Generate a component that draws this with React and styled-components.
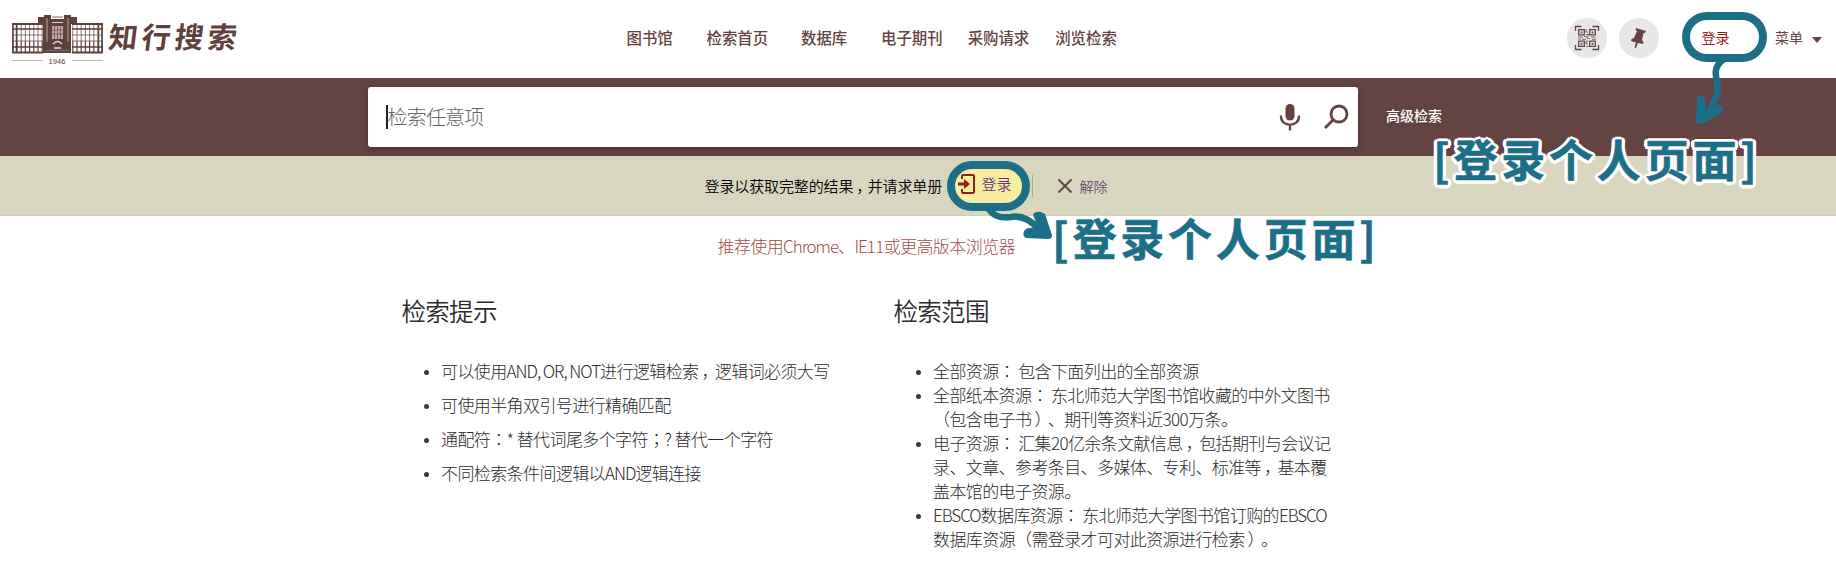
import React from "react";
import styled, { createGlobalStyle } from "styled-components";

const brown = "#644442";
const teal = "#1d6f88";

const GlobalStyle = createGlobalStyle`
  * { box-sizing: border-box; }
  body {
    margin: 0;
    background: #fff;
    color: #2a2a2a;
    font-family: "Noto Sans CJK SC", sans-serif;
    text-spacing-trim: space-all;
    overflow: hidden;
  }
`;

const Page = styled.div`
  position: relative;
  width: 1836px;
  height: 564px;
  overflow: hidden;
`;

const Header = styled.header`
  display: flex;
  align-items: center;
  height: 78px;
  padding-left: 11px;
`;

const Logo = styled.div`
  display: flex;
  width: 615.5px;
  height: 78px;
  align-items: center;
`;

const LogoName = styled.span`
  margin: -8px 0 0 5px;
  color: #5f403c;
  font-size: 29px;
  font-weight: 700;
  letter-spacing: 4px;
  line-height: 40px;
  transform: skewX(-7deg);
`;

const Nav = styled.nav`
  display: flex;
  width: 940.5px;
  margin-top: -5px;
  line-height: 22px;
`;

const NavLink = styled.a`
  margin-right: ${(p) => p.$gap}px;
  color: ${brown};
  font-size: 15.4px;
  font-weight: 500;
  white-space: nowrap;
`;

const RoundButton = styled.button`
  display: flex;
  align-items: center;
  justify-content: center;
  width: 40px;
  height: 40px;
  margin: -2px 11.5px 0 0;
  padding: 0;
  border: 0;
  border-radius: 50%;
  background: #e7e7e7;
`;

const UserLink = styled.a`
  margin: -5px 0 0 31.5px;
  width: 73.5px;
  color: #9b1c1c;
  font-size: 14px;
  line-height: 20px;
`;

const MenuLink = styled.a`
  display: flex;
  align-items: center;
  gap: 9px;
  margin-top: -5px;
  color: ${brown};
  font-size: 14px;
  line-height: 20px;
`;

const Caret = styled.span`
  border: 5.5px solid transparent;
  border-top: 6.5px solid ${brown};
  border-bottom: 0;
  margin-top: 6px;
`;

const SearchBand = styled.section`
  display: flex;
  align-items: center;
  height: 78px;
  padding-left: 368px;
  background: ${brown};
`;

const SearchBox = styled.div`
  display: flex;
  align-items: center;
  width: 990px;
  height: 60px;
  padding: 0 9px 0 18px;
  border-radius: 3px;
  background: #fff;
  box-shadow: 0 2px 6px rgba(0, 0, 0, 0.3);
`;

const Cursor = styled.span`
  width: 1.5px;
  height: 24px;
  background: #222;
`;

const Placeholder = styled.span`
  flex: 1;
  color: #626262;
  font-size: 20px;
  font-weight: 300;
  letter-spacing: -0.8px;
  line-height: 30px;
`;

const SearchTools = styled.div`
  display: flex;
  align-items: center;
  gap: 22px;
`;

const Advanced = styled.a`
  margin: -5px 0 0 28px;
  color: #fff;
  font-size: 14px;
  font-weight: 500;
  line-height: 20px;
`;

const Notice = styled.section`
  display: flex;
  align-items: center;
  height: 60px;
  padding-left: 704.5px;
  border-bottom: 1px solid #d0cdb6;
  background: #d9d6c0;
  font-size: 15px;
  font-weight: 350;
  letter-spacing: -0.12px;
  line-height: 22px;
`;

const NoticeText = styled.span`
  width: 242.5px;
  color: #000;
  white-space: nowrap;
`;

const LoginPill = styled.a`
  display: flex;
  align-items: center;
  gap: 6.5px;
  width: 83px;
  height: 50px;
  padding: 0 0 3px 3px;
  border: 8px solid ${teal};
  border-radius: 25px;
  background: #f7eda0;
  color: #643a7c;
`;

const Separator = styled.span`
  width: 1px;
  height: 22px;
  margin: 0 24px 0 2px;
  background: #aaa996;
`;

const Dismiss = styled.a`
  display: flex;
  align-items: center;
  gap: 6.5px;
  color: #65506a;
  font-size: 14px;
`;

const Recommend = styled.p`
  margin: 17px 0 0 717.5px;
  color: #a84b4b;
  font-size: 17px;
  font-weight: 300;
  letter-spacing: -0.6px;
  line-height: 26px;
`;

const Columns = styled.main`
  display: flex;
  gap: 72px;
  padding: 33px 0 0 401.5px;
`;

const Column = styled.section`
  width: 420px;
`;

const Heading = styled.h2`
  margin: 0;
  font-size: 24.5px;
  font-weight: 350;
  letter-spacing: -0.7px;
  line-height: 38px;
`;

const List = styled.ul`
  margin: 29px 0 0;
  padding: 0 0 0 39.5px;
`;

const Item = styled.li`
  position: relative;
  margin-bottom: ${(p) => p.$space || 0}px;
  list-style: none;
  font-size: 17px;
  font-weight: 300;
  letter-spacing: -0.6px;
  line-height: 24px;
  white-space: nowrap;

  &::before {
    content: "";
    position: absolute;
    left: -17px;
    top: 11px;
    width: 5px;
    height: 5px;
    border-radius: 50%;
    background: #3a3a3a;
  }
`;

const Line = styled.span`
  display: block;
`;

const Centered = styled.span`
  font-family: "Noto Sans CJK TC", sans-serif;
`;

const Inset = styled.span`
  padding-left: 3px;
  letter-spacing: -3.6px;
`;

const Latin = styled.span`
  letter-spacing: -1.05px;
`;

const LoginRing = styled.span`
  position: absolute;
  left: 1682px;
  top: 12px;
  width: 85px;
  height: 50px;
  border: 8px solid ${teal};
  border-radius: 25px;
`;

const Arrow = styled.svg`
  position: absolute;
  left: ${(p) => p.$x}px;
  top: ${(p) => p.$y}px;
`;

const Callout = styled.span`
  position: absolute;
  left: ${(p) => p.$x}px;
  top: ${(p) => p.$y}px;
  color: ${teal};
  font-size: 44px;
  font-weight: 700;
  letter-spacing: 3.8px;
  line-height: 60px;
  white-space: nowrap;
  -webkit-text-stroke: 0.6px ${teal};
  text-shadow: 3.5px 0 #fff, -3.5px 0 #fff, 0 3.5px #fff, 0 -3.5px #fff,
    2.5px 2.5px #fff, -2.5px 2.5px #fff, 2.5px -2.5px #fff, -2.5px -2.5px #fff,
    3.2px 1.3px #fff, -3.2px 1.3px #fff, 3.2px -1.3px #fff, -3.2px -1.3px #fff;
`;

const T = ({ children }) =>
  children.split(/([，：；）]|[A-Za-z][A-Za-z, ]*[A-Za-z])/).map((s, i) => {
    if (i % 2 === 0) return s;
    if (s === "，" || s === "）") return <Inset key={i}>{s}</Inset>;
    if (s === "：" || s === "；") return <Centered key={i}>{s}</Centered>;
    return <Latin key={i}>{s}</Latin>;
  });

const range = (n) => Array.from({ length: n }, (_, i) => i);

const Building = () => (
  <svg width="93" height="56" viewBox="0 0 93 56" fill="none" stroke="#5f403c">
    <path d="M27 6h6V4h7v4h13V4h7v2h6v7h-6v29H32V13h-5z" fill="#5f403c" stroke="none" />
    {[1, 61].map((x) => (
      <g key={x}>
        <path d={`M${x} 13h31M${x} 41.500h31`} strokeWidth="2" />
        <path d={`M${x} 18h31M${x} 36h31`} strokeWidth="1.500" />
        <path d={`M${x} 24h31M${x} 30h31`} strokeWidth=".7" />
        {range(8).map((i) => (
          <path key={i} d={`M${x + 0.8 + i * 4.2} 12v18`} strokeWidth=".7" />
        ))}
        {range(8).map((i) => (
          <path key={i} d={`M${x + 0.8 + i * 4.2} 30v12`} strokeWidth="1.200" />
        ))}
      </g>
    ))}
    <path d="M2 12v30M5.500 12v30M91 12v30M87.500 12v30" strokeWidth="1.500" />
    <path d="M41 6h11M41 9h11" strokeWidth="1" opacity=".8" />
    <path d="M41 11.500h11" stroke="#d8cdca" />
    <path d="M41 15h11v13H41z" fill="#baa9a5" stroke="none" />
    <path d="M43.500 15v13M46.500 15v13M49.500 15v13M41 19h11M41 23h11" strokeWidth=".6" />
    <path d="M36 7v24M57 7v24" stroke="#a8948f" strokeWidth="1.200" />
    <path d="M42 33q4.500-5 9 0M43 37h7" stroke="#e6dddb" strokeWidth="1.400" />
    <path d="M34 39.500h24" stroke="#8a716d" strokeWidth=".8" />
    <path d="M1 49.500h31M61 49.500h31" stroke="#c0b5b3" />
    <text x="46" y="52.500" textAnchor="middle" fontFamily="Liberation Sans" fontSize="7.600" fill="#5f403c" stroke="none">1946</text>
  </svg>
);

const QrIcon = () => (
  <svg width="26" height="26" viewBox="0 0 26 26" fill="none" stroke={brown}>
    <path d="M1.500 6V1.500h6M18.500 1.500h6V6M1.500 20v4.500h6M18.500 24.500h6V20" strokeWidth="1.300" />
    <path d="M4.700 4.700h5.600v5.200H4.700zM15.700 4.700h5.600v5.200h-5.600zM4.700 16.200h5.600v5.200H4.700zM15.700 16.200h5.600v5.200h-5.600z" strokeWidth="1.300" />
    <path d="M6.700 7.300h1.700M17.700 7.300h1.700M6.700 18.800h1.700M17.700 18.800h1.700" strokeWidth="1.700" />
    <path d="M12 4v3h2M12 9.500h3M4 12h5M10 11.500h3v2h3M17 12h4.500M4 14h3M8 14.300h4M18 14.300h4M12 16v3h2M12 21.500h3M14 9v3M13 15v3" opacity=".75" />
  </svg>
);

const PinIcon = () => (
  <svg width="20" height="22" viewBox="0 0 20 22" fill={brown}>
    <path d="M7 1 17 4 16 6 14.500 6 13 13 14.500 15 14 17 9 16 7 21 5.500 20.500 7 15.500 2 14 2.500 12 5 11 8 4 6.500 3z" />
  </svg>
);

const MicIcon = () => (
  <svg width="22" height="28" viewBox="0 0 22 28" fill="none" stroke={brown} strokeWidth="2.300">
    <rect x="6.500" y="1" width="9" height="16.500" rx="4.500" fill={brown} stroke="none" />
    <path d="M2 12.500v1c0 11 18 11 18 0v-1M11 22v5.500" />
  </svg>
);

const SearchIcon = () => (
  <svg width="26" height="26" viewBox="0 0 26 26" fill="none" stroke={brown} strokeWidth="2.800">
    <circle cx="16" cy="10" r="8" />
    <path d="M10.500 15.500 2 24" />
  </svg>
);

const SignInIcon = () => (
  <svg width="17" height="22" viewBox="0 0 17 22" fill="none" stroke="#8d1f1f" strokeWidth="2">
    <path d="M4 6V3q0-1 1-1h10q1 0 1 1v16q0 1-1 1H5q-1 0-1-1v-3" />
    <path d="M0 11h8" strokeWidth="3" />
    <path d="M6 6l6 5-6 5z" fill="#8d1f1f" stroke="none" />
  </svg>
);

const nav = [
  ["图书馆", 33.8],
  ["检索首页", 33],
  ["数据库", 33.8],
  ["电子期刊", 25],
  ["采购请求", 26],
  ["浏览检索", 0],
];

const tips = [
  "可以使用AND, OR, NOT进行逻辑检索，逻辑词必须大写",
  "可使用半角双引号进行精确匹配",
  "通配符：* 替代词尾多个字符；? 替代一个字符",
  "不同检索条件间逻辑以AND逻辑连接",
];

const scopes = [
  ["全部资源： 包含下面列出的全部资源"],
  ["全部纸本资源： 东北师范大学图书馆收藏的中外文图书", "（包含电子书）、期刊等资料近300万条。"],
  ["电子资源： 汇集20亿余条文献信息，包括期刊与会议记", "录、文章、参考条目、多媒体、专利、标准等，基本覆", "盖本馆的电子资源。"],
  ["EBSCO数据库资源： 东北师范大学图书馆订购的EBSCO", "数据库资源（需登录才可对此资源进行检索）。"],
];

export default function App() {
  return (
    <Page>
      <GlobalStyle />
      <Header>
        <Logo>
          <Building />
          <LogoName>知行搜索</LogoName>
        </Logo>
        <Nav>
          {nav.map(([label, gap]) => (
            <NavLink key={label} $gap={gap}>{label}</NavLink>
          ))}
        </Nav>
        <RoundButton><QrIcon /></RoundButton>
        <RoundButton><PinIcon /></RoundButton>
        <UserLink>登录</UserLink>
        <MenuLink>菜单<Caret /></MenuLink>
      </Header>
      <SearchBand>
        <SearchBox>
          <Cursor />
          <Placeholder>检索任意项</Placeholder>
          <SearchTools>
            <MicIcon />
            <SearchIcon />
          </SearchTools>
        </SearchBox>
        <Advanced>高级检索</Advanced>
      </SearchBand>
      <Notice>
        <NoticeText><T>登录以获取完整的结果，并请求单册</T></NoticeText>
        <LoginPill><SignInIcon />登录</LoginPill>
        <Separator />
        <Dismiss>
          <svg width="16" height="16" viewBox="0 0 16 16" stroke={brown} strokeWidth="2">
            <path d="M1.500 1.500l13 13M14.500 1.500l-13 13" />
          </svg>
          解除
        </Dismiss>
      </Notice>
      <Recommend><T>推荐使用Chrome、IE11或更高版本浏览器</T></Recommend>
      <Columns>
        <Column>
          <Heading>检索提示</Heading>
          <List>
            {tips.map((t) => (
              <Item key={t} $space={10}><T>{t}</T></Item>
            ))}
          </List>
        </Column>
        <Column>
          <Heading>检索范围</Heading>
          <List>
            {scopes.map((lines) => (
              <Item key={lines[0]}>
                {lines.map((l) => (
                  <Line key={l}><T>{l}</T></Line>
                ))}
              </Item>
            ))}
          </List>
        </Column>
      </Columns>
      <LoginRing />
      <Arrow $x={1690} $y={56} width="50" height="72" fill={teal}>
        <path d="M34 3C24 10 25 17 27 26C29 36 26 43 20 52" fill="none" stroke={teal} strokeWidth="6.500" />
        <path d="M7 42q0-3 5-2q3 0 3 3l1 10 10-4q7-1 7 2 1 4-2 6L14 67q-4 1-8 0z" />
      </Arrow>
      <Arrow $x={980} $y={206} width="75" height="36" fill={teal}>
        <path d="M8 2C14 11 21 12 31 11C43 9 51 15 59 23" fill="none" stroke={teal} strokeWidth="6.500" />
        <path d="M53 9q2-4 8-3l4 2L72 29q0 4-4 4L46 32q-4-2-2-7 2-3 5-3l9-1z" />
      </Arrow>
      <Callout $x={1433} $y={128}>[登录个人页面]</Callout>
      <Callout $x={1052} $y={207}>[登录个人页面]</Callout>
    </Page>
  );
}
